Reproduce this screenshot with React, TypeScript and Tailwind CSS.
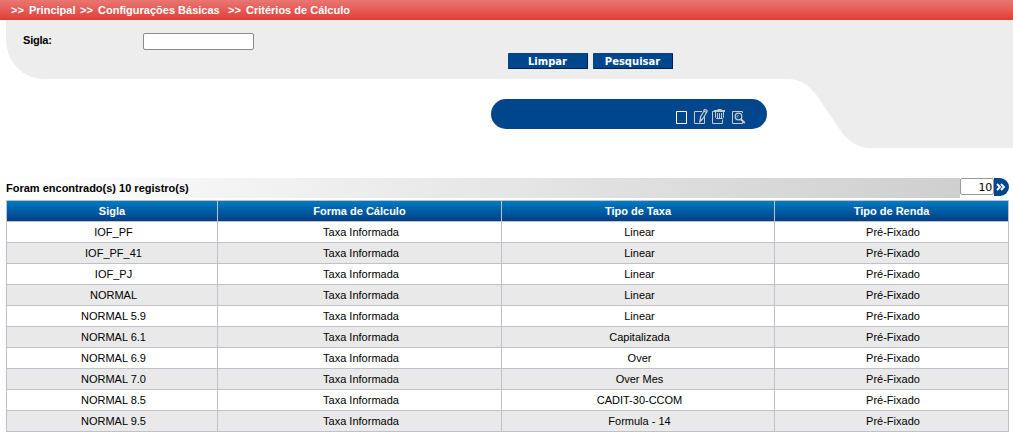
import React from "react";

const columns = ["Sigla", "Forma de Cálculo", "Tipo de Taxa", "Tipo de Renda"];

const rows: [string, string][] = [
  ["IOF_PF", "Linear"],
  ["IOF_PF_41", "Linear"],
  ["IOF_PJ", "Linear"],
  ["NORMAL", "Linear"],
  ["NORMAL 5.9", "Linear"],
  ["NORMAL 6.1", "Capitalizada"],
  ["NORMAL 6.9", "Over"],
  ["NORMAL 7.0", "Over Mes"],
  ["NORMAL 8.5", "CADIT-30-CCOM"],
  ["NORMAL 9.5", "Formula - 14"],
];

function Breadcrumb() {
  return (
    <nav className="flex h-5 items-center whitespace-pre bg-linear-to-b from-[#e87672] to-[#e03a36] pl-[11px] font-bold text-white">
      <span className="w-[18px]">&gt;&gt;</span>
      <span className="w-[51px]">Principal</span>
      <span className="w-[18px]">&gt;&gt;</span>
      <span className="w-[130px]">Configurações Básicas</span>
      <span className="w-[18px]">&gt;&gt;</span>
      <span>Critérios de Cálculo</span>
    </nav>
  );
}

function ActionButton({ label }: { label: string }) {
  return (
    <button className="h-4 w-20 rounded-[1px] border-r border-b border-[#002050] bg-[#00468c] pt-px font-['DejaVu_Sans',sans-serif] text-[10px] leading-[15px] font-bold text-white">
      {label}
    </button>
  );
}

function Toolbar() {
  return (
    <div className="ml-[491px] mt-[30px] h-[30px] w-[276px] rounded-full bg-[#00468c] pl-[184px] pt-[9px]">
      <svg width="74" height="18" viewBox="675 108 74 18" fill="none" stroke="#c9c9c9">
        <path d="M676.5 111.5h10v12h-10z" stroke="#fff" />
        <path d="M702 111.5h-7.500v12h10v-7.500" />
        <path d="M700 121.500l.5-4.500 3.500-6 2.500 1.500-3.500 6z" strokeWidth="1.200" />
        <path d="M703.500 110.500l1.500-1 2 1v1.500M699.500 122l2.500-3" strokeWidth="1.300" />
        <path d="M715 111.500h-2.500v12h10v-4" />
        <path d="M714 111.500h11M714 110.500h11M717.500 109.500h4" />
        <path d="M715.500 112v5.500l1 1h6l1-1V112M717.500 113v5M719.500 113v5M721.500 113v5" />
        <path d="M742.500 113v-1.500h-10v12h10v-2" />
        <circle cx="738.500" cy="116.500" r="3.300" strokeWidth="1.300" />
        <path d="M740.500 119l4.300 4" strokeWidth="2" />
        <path d="M737 117.500c0-1.200.5-2 1.500-2" />
      </svg>
    </div>
  );
}

function SearchPanel() {
  return (
    <section className="relative isolate h-[158px]">
      <svg className="absolute inset-0 -z-10" width="1013" height="128" viewBox="0 20 1013 128">
        <path
          d="M6 20H1013V148H868C857 147 849 141 843 134L815 93C809 86 800 79 788 79H45C22 79 6 61 6 39Z"
          fill="#ededed"
        />
      </svg>
      <div className="flex h-[33px] items-start pl-[23px] pt-[13px]">
        <label htmlFor="sigla" className="w-[120px] leading-[15px] font-bold tracking-[-0.2px]">
          Sigla:
        </label>
        <input id="sigla" className="h-[17px] w-[111px] rounded-[2px] border border-[#8b8b8b] bg-white" />
      </div>
      <div className="flex gap-[5px] pl-[508px]">
        <ActionButton label="Limpar" />
        <ActionButton label="Pesquisar" />
      </div>
      <Toolbar />
    </section>
  );
}

function ResultsBar() {
  return (
    <div className="ml-1.5 flex h-[22px] w-[1003px] items-start">
      <div className="h-5 flex-1 bg-linear-to-r from-white to-[#cfcfcf] leading-5 font-bold">
        Foram encontrado(s) 10 registro(s)
      </div>
      <input
        defaultValue="10"
        aria-label="Registros"
        className="h-[17px] w-[34px] rounded-[2px] border border-[#999] bg-white pt-[2px] pr-px text-right font-['DejaVu_Sans',sans-serif] text-[11px] tracking-[-0.3px]"
      />
      <button aria-label="Avançar" className="flex h-[18px] w-[15px] items-center justify-center rounded-r-full bg-[#00468c] pr-px">
        <svg width="10" height="9" viewBox="0 0 10 9" fill="none" stroke="#fff" strokeWidth="1.900">
          <path d="M1 1l3 3-3 3M5 1l3 3-3 3" />
        </svg>
      </button>
    </div>
  );
}

export default function App() {
  return (
    <main className="h-[435px] w-[1013px] overflow-hidden bg-white font-['Liberation_Sans',Arial,sans-serif] text-[11px] text-black">
      <Breadcrumb />
      <SearchPanel />
      <ResultsBar />
      <table className="ml-1.5 w-[1003px] table-fixed border-separate border-spacing-px bg-[#c0c0c8] text-center leading-5">
        <colgroup>
          <col className="w-[210px]" />
          <col className="w-[283px]" />
          <col className="w-[272px]" />
          <col className="w-[233px]" />
        </colgroup>
        <thead>
          <tr className="h-5 text-white">
            {columns.map((name) => (
              <th key={name} className="bg-linear-to-b from-[#047bc1] to-[#003f87] p-0">
                {name}
              </th>
            ))}
          </tr>
        </thead>
        <tbody>
          {rows.map(([sigla, taxa]) => (
            <tr key={sigla} className="h-5 bg-white even:bg-[#e9e9e9]">
              <td className="py-0 pr-0 pl-[3px]">{sigla}</td>
              <td className="py-0 pr-0 pl-[3px]">Taxa Informada</td>
              <td className="py-0 pr-0 pl-[3px]">{taxa}</td>
              <td className="py-0 pr-0 pl-[3px]">Pré-Fixado</td>
            </tr>
          ))}
        </tbody>
      </table>
    </main>
  );
}
